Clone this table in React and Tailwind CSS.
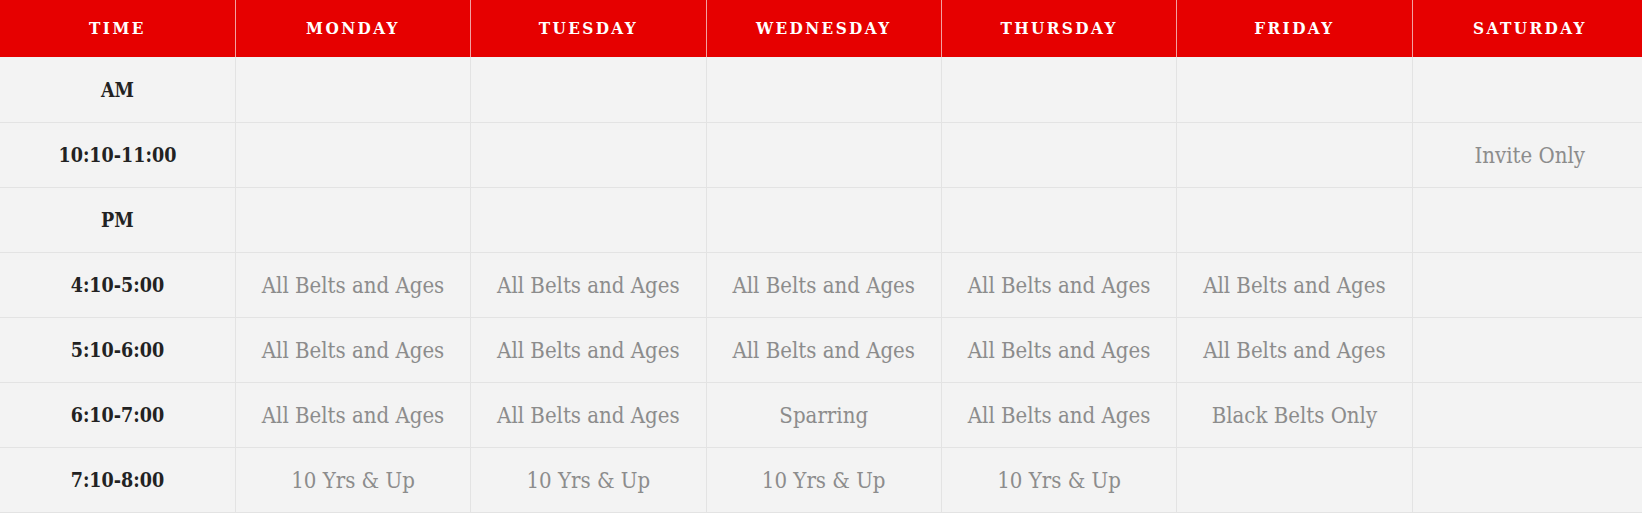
const days = ['Monday', 'Tuesday', 'Wednesday', 'Thursday', 'Friday', 'Saturday']

const ALL = 'All Belts and Ages'
const TEN = '10 Yrs & Up'

const rows = [
  { time: 'AM', cells: ['', '', '', '', '', ''] },
  { time: '10:10-11:00', cells: ['', '', '', '', '', 'Invite Only'] },
  { time: 'PM', cells: ['', '', '', '', '', ''] },
  { time: '4:10-5:00', cells: [ALL, ALL, ALL, ALL, ALL, ''] },
  { time: '5:10-6:00', cells: [ALL, ALL, ALL, ALL, ALL, ''] },
  { time: '6:10-7:00', cells: [ALL, ALL, 'Sparring', ALL, 'Black Belts Only', ''] },
  { time: '7:10-8:00', cells: [TEN, TEN, TEN, TEN, '', ''] },
]

export default function App() {
  return (
    <div className="h-[513px] w-full overflow-hidden bg-[#f3f3f3] font-['DejaVu_Serif_Condensed','DejaVu_Serif',serif]">
      <table className="w-[1648px] table-fixed border-collapse">
        <thead>
          <tr className="h-[57px] bg-[#e60000]">
            <th className="border-r border-[#f2a0a0] text-[17px] font-bold uppercase tracking-[2.4px] text-white">
              Time
            </th>
            {days.map((day, i) => (
              <th
                key={day}
                className={`text-[17px] font-bold uppercase tracking-[2.4px] text-white ${
                  i < days.length - 1 ? 'border-r border-[#f2a0a0]' : ''
                }`}
              >
                {day}
              </th>
            ))}
          </tr>
        </thead>
        <tbody>
          {rows.map((row) => (
            <tr key={row.time} className="h-[65px] border-b border-[#e3e3e3]">
              <td className="border-r border-[#e3e3e3] pt-[2px] text-center text-[19.5px] font-bold text-[#222]">
                {row.time}
              </td>
              {row.cells.map((cell, i) => (
                <td
                  key={i}
                  className="border-r border-[#e3e3e3] pt-[2px] text-center text-[22px] text-[#8c8c8c]"
                >
                  {cell}
                </td>
              ))}
            </tr>
          ))}
        </tbody>
      </table>
    </div>
  )
}
